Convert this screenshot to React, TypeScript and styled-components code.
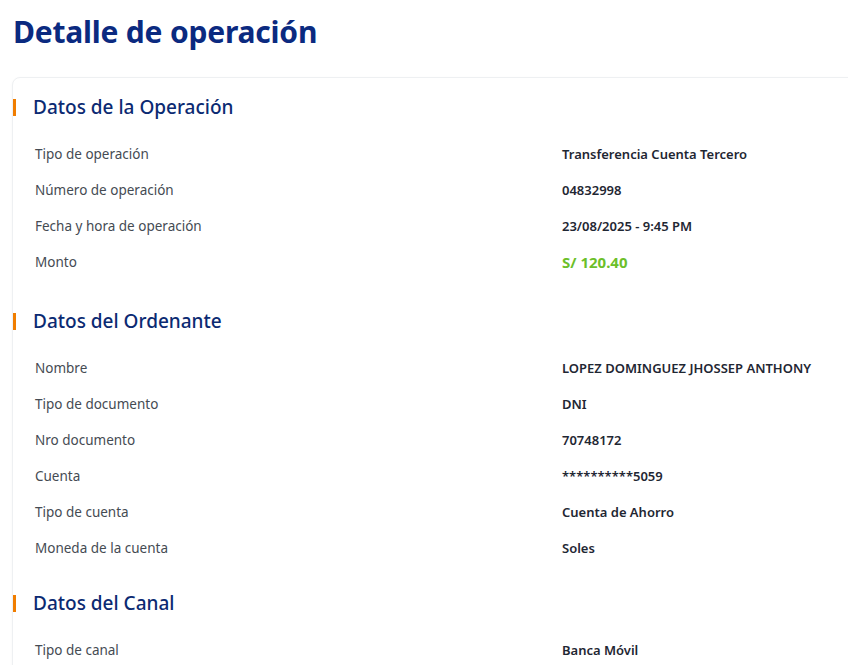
import styled, { createGlobalStyle } from 'styled-components';

const GlobalStyle = createGlobalStyle`
  * { box-sizing: border-box; }
  body {
    margin: 0;
    background: #ffffff;
    font-family: 'Noto Sans', 'Open Sans', sans-serif;
    overflow: hidden;
  }
`;

interface Field {
  label: string;
  value: string;
  highlight?: boolean;
}

interface Section {
  title: string;
  fields: Field[];
}

const sections: Section[] = [
  {
    title: 'Datos de la Operación',
    fields: [
      { label: 'Tipo de operación', value: 'Transferencia Cuenta Tercero' },
      { label: 'Número de operación', value: '04832998' },
      { label: 'Fecha y hora de operación', value: '23/08/2025 - 9:45 PM' },
      { label: 'Monto', value: 'S/ 120.40', highlight: true },
    ],
  },
  {
    title: 'Datos del Ordenante',
    fields: [
      { label: 'Nombre', value: 'LOPEZ DOMINGUEZ JHOSSEP ANTHONY' },
      { label: 'Tipo de documento', value: 'DNI' },
      { label: 'Nro documento', value: '70748172' },
      { label: 'Cuenta', value: '**********5059' },
      { label: 'Tipo de cuenta', value: 'Cuenta de Ahorro' },
      { label: 'Moneda de la cuenta', value: 'Soles' },
    ],
  },
  {
    title: 'Datos del Canal',
    fields: [{ label: 'Tipo de canal', value: 'Banca Móvil' }],
  },
];

const App = () => {
  return (
    <>
      <GlobalStyle />
      <Page>
        <Title>Detalle de operación</Title>
        <Card>
          {sections.map((section) => (
            <Block key={section.title}>
              <SectionTitle>{section.title}</SectionTitle>
              <Rows>
                {section.fields.map((field) => (
                  <Row key={field.label} highlight={field.highlight}>
                    <Label>{field.label}</Label>
                    <Value highlight={field.highlight}>{field.value}</Value>
                  </Row>
                ))}
              </Rows>
            </Block>
          ))}
        </Card>
      </Page>
    </>
  );
};

export default App;

const Page = styled.div`
  width: 848px;
  height: 665px;
  padding: 12px 0 0 12px;
  overflow: hidden;
`;

const Title = styled.h1`
  margin: 0 0 0 1px;
  font-family: 'Noto Sans', sans-serif;
  font-weight: 700;
  font-size: 30px;
  line-height: 40px;
  letter-spacing: -0.2px;
  color: #0b2a80;
`;

const Card = styled.div`
  margin-top: 25px;
  width: 900px;
  background: #fff;
  border: 1px solid #eef0f2;
  border-radius: 8px;
  box-shadow: 0 1px 3px rgba(0, 0, 0, 0.04);
  padding: 17px 0 20px 0;
  display: flex;
  flex-direction: column;
  gap: 25px;
`;

const Block = styled.section`
  display: flex;
  flex-direction: column;
`;

const SectionTitle = styled.h2`
  position: relative;
  margin: 0;
  padding-left: 20px;
  font-family: 'Noto Sans', sans-serif;
  font-weight: 500;
  font-size: 19px;
  line-height: 24px;
  color: #0b2a72;

  &::before {
    content: '';
    position: absolute;
    left: 0;
    top: 4px;
    width: 3px;
    height: 17px;
    background: #f07d00;
  }
`;

const Rows = styled.div`
  margin-top: 17px;
  display: flex;
  flex-direction: column;
`;

const Row = styled.div<{ highlight?: boolean }>`
  display: grid;
  grid-template-columns: 527px 1fr;
  align-items: center;
  height: 36px;
  margin-bottom: ${(p) => (p.highlight ? '4px' : '0')};
  padding-left: 22px;
`;

const Label = styled.span`
  font-family: 'Noto Sans', sans-serif;
  font-size: 13.5px;
  color: #454b53;
`;

const Value = styled.span<{ highlight?: boolean }>`
  font-family: 'Noto Sans', sans-serif;
  font-weight: ${(p) => (p.highlight ? 700 : 600)};
  font-size: ${(p) => (p.highlight ? '15px' : '13px')};
  color: ${(p) => (p.highlight ? '#6cbf2a' : '#1f2733')};
`;
